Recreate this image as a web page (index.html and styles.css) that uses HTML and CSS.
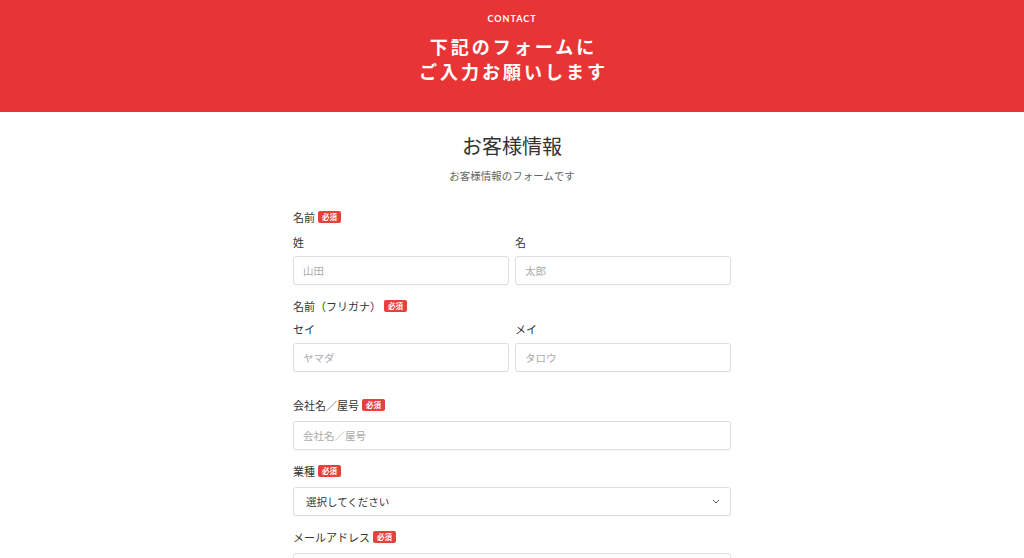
FILE: index.html
```html
<!DOCTYPE html>
<html lang="ja">
<head>
    <meta charset="UTF-8">
    <meta name="viewport" content="width=device-width, initial-scale=1.0">
    <title>お問い合わせ</title>
    <link rel="stylesheet" href="styles.css">
</head>
<body>
    <header class="hero">
        <p class="hero-label">CONTACT</p>
        <h1 class="hero-title">下記のフォームに<br>ご入力お願いします</h1>
    </header>

    <main class="form-wrap">
        <h2 class="section-title">お客様情報</h2>
        <p class="section-lead">お客様情報のフォームです</p>

        <form class="form">
            <div class="field">
                <div class="label">名前<span class="required">必須</span></div>
                <div class="pair">
                    <div class="col">
                        <div class="sub-label">姓</div>
                        <input type="text" placeholder="山田">
                    </div>
                    <div class="col">
                        <div class="sub-label">名</div>
                        <input type="text" placeholder="太郎">
                    </div>
                </div>
            </div>

            <div class="field">
                <div class="label">名前（フリガナ）<span class="required">必須</span></div>
                <div class="pair tight">
                    <div class="col">
                        <div class="sub-label">セイ</div>
                        <input type="text" placeholder="ヤマダ">
                    </div>
                    <div class="col">
                        <div class="sub-label">メイ</div>
                        <input type="text" placeholder="タロウ">
                    </div>
                </div>
            </div>

            <div class="field spaced">
                <div class="label">会社名／屋号<span class="required">必須</span></div>
                <input type="text" placeholder="会社名／屋号">
            </div>

            <div class="field">
                <div class="label">業種<span class="required">必須</span></div>
                <div class="select-box">
                    <select>
                        <option>選択してください</option>
                    </select>
                    <svg class="chevron" width="8" height="5" viewBox="0 0 8 5"><path d="M1 1l3 3 3-3" fill="none" stroke="#555" stroke-width="1"/></svg>
                </div>
            </div>

            <div class="field">
                <div class="label">メールアドレス<span class="required">必須</span></div>
                <input type="email" placeholder="example@example.com">
            </div>
        </form>
    </main>
</body>
</html>
```

FILE: styles.css
```css
body {
    margin: 0;
    font-family: "Noto Sans CJK JP", "Noto Sans", sans-serif;
    background-color: #fff;
    color: #333;
}
.hero {
    background-color: #e93436;
    color: #fff;
    text-align: center;
    padding: 12px 0 28px;
    height: 72px;
}
.hero-label {
    margin: 0;
    font-family: "Lato", "Noto Sans", sans-serif;
    font-size: 9px;
    font-weight: bold;
    letter-spacing: 1px;
    line-height: 14px;
}
.hero-title {
    margin: 8px 0 0;
    font-size: 18px;
    font-weight: bold;
    letter-spacing: 3px;
    line-height: 25px;
    padding-left: 3px;
}
.form-wrap {
    width: 438px;
    margin: 0 auto;
    padding-top: 19px;
}
.section-title {
    margin: 0;
    font-size: 20px;
    font-weight: normal;
    text-align: center;
    line-height: 30px;
}
.section-lead {
    margin: 7px 0 0;
    font-size: 10.5px;
    color: #666;
    text-align: center;
    line-height: 16px;
}
.form {
    margin-top: 25px;
}
.field {
    margin-bottom: 13px;
}
.field.spaced {
    margin-top: 25px;
}
.label {
    font-size: 11px;
    line-height: 16px;
    display: flex;
    align-items: center;
    margin-bottom: 8px;
}
.required {
    display: inline-block;
    background: #e8403a;
    color: #fff;
    font-size: 7.5px;
    font-weight: bold;
    line-height: 12px;
    padding: 0 4px;
    border-radius: 2px;
    margin-left: 3px;
}
.field > .label + .pair {
    margin-top: 9px;
}
.field > .label + .pair.tight {
    margin-top: 7px;
}
.pair {
    display: flex;
    gap: 6px;
}
.col {
    flex: 1;
}
.sub-label {
    font-size: 11px;
    line-height: 16px;
    margin-bottom: 6px;
}
.field > .label:has(+ .pair) {
    margin-bottom: 0;
}
input, select {
    box-sizing: border-box;
    width: 100%;
    height: 29px;
    border: 1px solid #dedede;
    border-radius: 3px;
    background: #fff;
    font-family: inherit;
    font-size: 10.5px;
    color: #333;
    padding: 0 9px;
    box-shadow: 0 1px 2px rgba(0, 0, 0, 0.03);
}
input::placeholder {
    color: #aaa;
}
.select-box {
    position: relative;
}
select {
    appearance: none;
    padding: 0 12px;
}
.chevron {
    position: absolute;
    right: 11px;
    top: 12px;
    pointer-events: none;
}
```
